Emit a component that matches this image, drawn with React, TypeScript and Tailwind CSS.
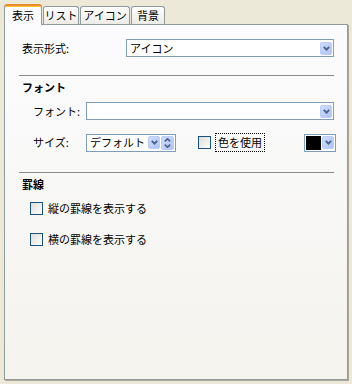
import React from "react";

const font = { fontFamily: '"Noto Sans CJK JP", "Noto Sans", sans-serif' };

function Arrow() {
  return (
    <svg width="7" height="5" viewBox="0 0 7 5">
      <path d="M0.8 0.8 L3.5 3.6 L6.2 0.8" stroke="#4d6185" strokeWidth="1.8" fill="none" />
    </svg>
  );
}

function DropBtn() {
  return (
    <div className="flex items-center justify-center w-[12px] h-[13px] rounded-[2px] border border-[#b9cdf6] bg-linear-to-br from-[#cfdcfd] to-[#aec3f3]">
      <Arrow />
    </div>
  );
}

function SpinBtn() {
  return (
    <div className="flex flex-col items-center justify-center gap-[2px] w-[13px] h-[14px] rounded-[2px] border border-[#b9cdf6] bg-linear-to-br from-[#cfdcfd] to-[#aec3f3]">
      <svg width="7" height="4" viewBox="0 0 7 4">
        <path d="M0.8 3.3 L3.5 0.8 L6.2 3.3" stroke="#4d6185" strokeWidth="1.6" fill="none" />
      </svg>
      <svg width="7" height="4" viewBox="0 0 7 4">
        <path d="M0.8 0.7 L3.5 3.2 L6.2 0.7" stroke="#4d6185" strokeWidth="1.6" fill="none" />
      </svg>
    </div>
  );
}

function Check() {
  return <div className="w-[13px] h-[13px] border border-[#1c5180] bg-linear-to-br from-[#dcdcd7] to-white shrink-0" />;
}

function Tab({ label, active, w }: { label: string; active?: boolean; w: string }) {
  if (active) {
    return (
      <div
        className={`${w} h-[21px] -mb-px relative z-10 flex items-center justify-center text-[11px] border-x border-[#919b9c] border-t-2 border-t-[#e68b2c] shadow-[inset_0_1px_0_#ffc73c] bg-[#fcfcfe] rounded-t-[3px]`}
      >
        {label}
      </div>
    );
  }
  return (
    <div
      className={`${w} h-[18px] flex items-center justify-center text-[11px] border-x border-t border-[#919b9c] bg-linear-to-b from-white to-[#ecebe6] rounded-t-[3px]`}
    >
      {label}
    </div>
  );
}

export default function App() {
  return (
    <div className="w-[352px] h-[384px] bg-[#ece9d8] text-black" style={font}>
      <div className="flex items-end h-[24px] pl-[4px] gap-[1px]">
        <Tab label="表示" active w="w-[38px]" />
        <Tab label="リスト" w="w-[36px]" />
        <Tab label="アイコン" w="w-[50px]" />
        <Tab label="背景" w="w-[34px]" />
      </div>
      <div className="ml-[4px] w-[344px] h-[356px] border border-[#919b9c] shadow-[1px_1px_0_#aca899] bg-linear-to-b from-[#fcfcfe] to-[#f4f3ee] text-[11px]">
        <div className="flex items-center mt-[14px] h-[18px]">
          <span className="ml-[17px] w-[104px]">表示形式:</span>
          <div className="flex items-center justify-between w-[208px] h-[18px] border border-[#7f9db9] bg-white pl-[3px] pr-[1px]">
            <span>アイコン</span>
            <DropBtn />
          </div>
        </div>
        <div className="ml-[14px] mt-[18px] w-[315px] h-px bg-[#8a8a8a]" />
        <div className="ml-[17px] mt-[5px] h-[13px] leading-[13px] font-bold">フォント</div>
        <div className="flex items-center mt-[8px] h-[18px]">
          <span className="ml-[28px] w-[53px]">フォント:</span>
          <div className="flex items-center justify-end w-[248px] h-[18px] border border-[#7f9db9] bg-white pr-[1px]">
            <DropBtn />
          </div>
        </div>
        <div className="flex items-center mt-[13px] h-[19px]">
          <span className="ml-[28px] w-[53px]">サイズ:</span>
          <div className="flex items-center w-[90px] h-[18px] border border-[#7f9db9] bg-white pl-[3px] pr-[1px]">
            <span className="flex-1">デフォルト</span>
            <DropBtn />
            <div className="ml-[1px]">
              <SpinBtn />
            </div>
          </div>
          <div className="ml-[22px]">
            <Check />
          </div>
          <span className="ml-[4px] px-[2px] h-[19px] leading-[17px] border border-dotted border-black">色を使用</span>
          <div className="ml-auto mr-[11px] flex items-center gap-[1px] w-[32px] h-[18px] border border-[#7f9db9] bg-white px-[1px]">
            <div className="w-[15px] h-[14px] bg-black" />
            <DropBtn />
          </div>
        </div>
        <div className="ml-[14px] mt-[20px] w-[315px] h-px bg-[#8a8a8a]" />
        <div className="ml-[17px] mt-[5px] h-[13px] leading-[13px] font-bold">罫線</div>
        <div className="flex items-center gap-[5px] ml-[25px] mt-[11px] h-[13px]">
          <Check />
          <span>縦の罫線を表示する</span>
        </div>
        <div className="flex items-center gap-[5px] ml-[25px] mt-[18px] h-[13px]">
          <Check />
          <span>横の罫線を表示する</span>
        </div>
      </div>
    </div>
  );
}
